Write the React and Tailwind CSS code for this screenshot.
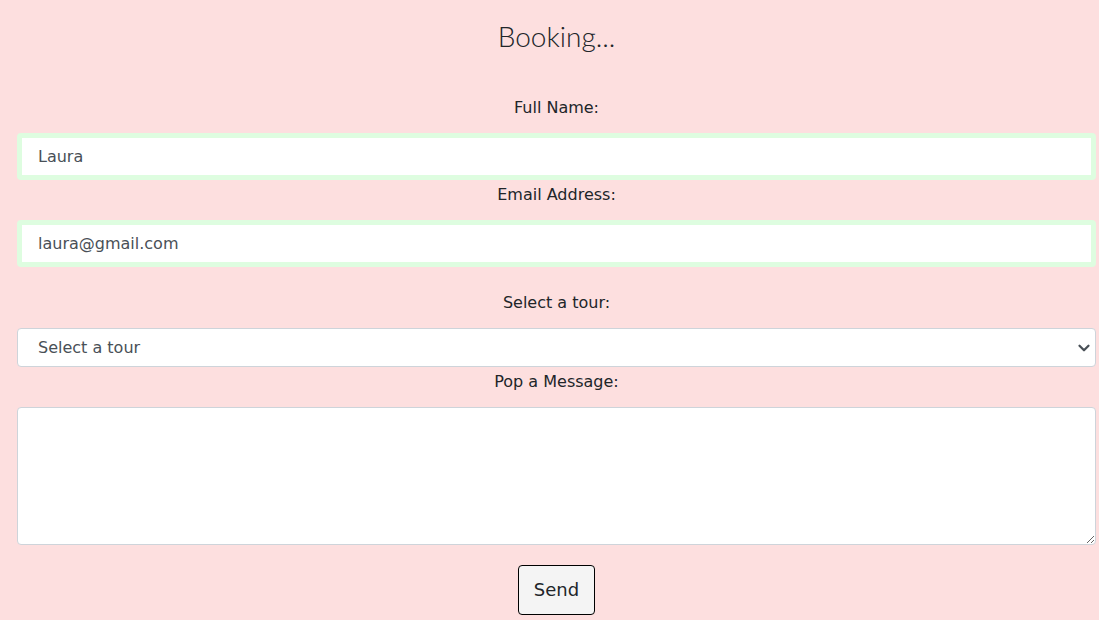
import { ChevronDown } from "lucide-react";

const labelClass = "mb-[10px] block text-center text-base leading-[30px]";
const inputClass =
  "block h-[47px] w-full rounded border-[5px] border-[#defde0] bg-white px-4 text-base text-[#495057] outline-none";

export default function App() {
  return (
    <main className="min-h-screen bg-[#fddfdf] pr-[3px] pb-[5px] pl-[17px] font-['DejaVu_Sans',sans-serif] text-[#212529]">
      <h1 className="pt-2 pb-[29px] text-center font-['Lato',sans-serif] text-[28px] leading-[56px] font-light">
        Booking...
      </h1>
      <form onSubmit={(e) => e.preventDefault()}>
        <label htmlFor="name" className={labelClass}>Full Name:</label>
        <input id="name" type="text" defaultValue="Laura" className={inputClass} />

        <label htmlFor="email" className={labelClass}>Email Address:</label>
        <input id="email" type="email" defaultValue="laura@gmail.com" className={inputClass} />

        <label htmlFor="tour" className={`${labelClass} mt-[21px]`}>Select a tour:</label>
        <div className="relative">
          <select
            id="tour"
            className="block h-[39px] w-full appearance-none rounded border border-[#ced4da] bg-white px-5 text-base text-[#495057]"
          >
            <option>Select a tour</option>
          </select>
          <ChevronDown
            aria-hidden="true"
            className="pointer-events-none absolute top-[11px] right-[3px] size-[18px] text-[#495057]"
            strokeWidth={3}
          />
        </div>

        <label htmlFor="message" className={labelClass}>Pop a Message:</label>
        <textarea
          id="message"
          className="block h-[138px] w-full resize rounded border border-[#ced4da] bg-white px-5 py-2 text-base text-[#495057]"
        />

        <button
          type="submit"
          className="mx-auto mt-5 block rounded border border-black bg-[#f4f4f4] px-[15px] py-[9px] text-lg leading-[30px]"
        >
          Send
        </button>
      </form>
    </main>
  );
}
